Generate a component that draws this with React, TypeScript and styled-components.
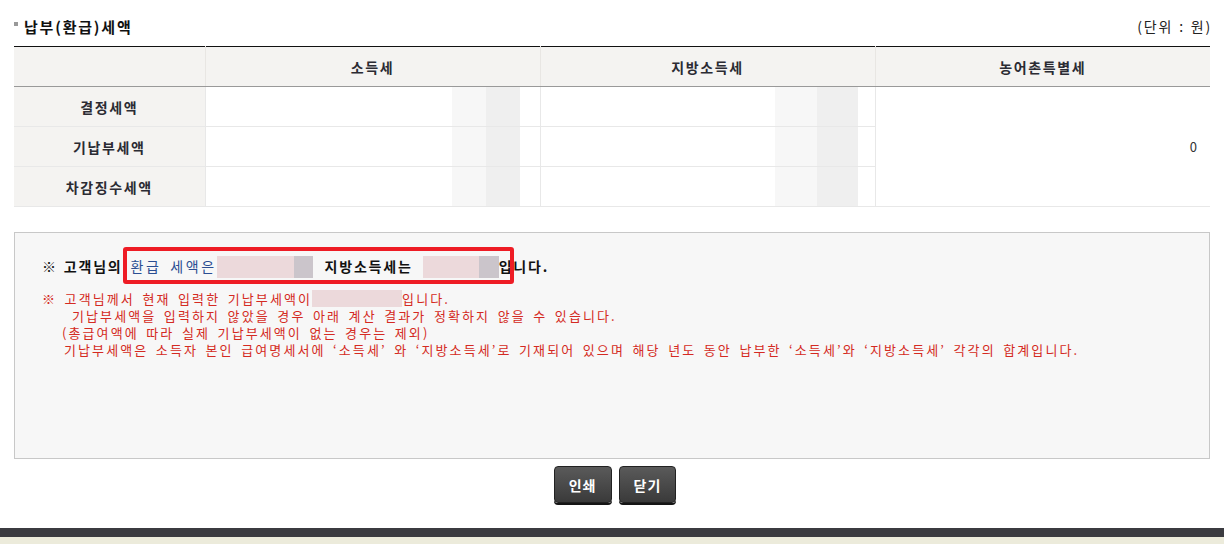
import * as React from "react";
import styled, { createGlobalStyle } from "styled-components";

const GlobalStyle = createGlobalStyle`
  html, body {
    margin: 0;
    padding: 0;
    background: #ecebdb;
  }
  body {
    font-family: "Noto Sans CJK KR", "Liberation Sans", sans-serif;
    color: #222;
  }
`;

const Page = styled.div`
  width: 1224px;
  height: 544px;
  display: flex;
  flex-direction: column;
  overflow: hidden;
`;

const Window = styled.div`
  background: #fff;
  height: 528px;
  flex: none;
  box-sizing: border-box;
  padding: 14px 14px 0;
  display: flex;
  flex-direction: column;
`;

const BottomBar = styled.div`
  height: 9px;
  flex: none;
  background: #3b3b40;
`;

const TitleRow = styled.div`
  height: 24px;
  display: flex;
  align-items: center;
  justify-content: space-between;
  margin-bottom: 8px;
`;

const Title = styled.h2`
  margin: 0;
  display: flex;
  align-items: center;
  gap: 6px;
  font-size: 15px;
  font-weight: 700;
  letter-spacing: 1.8px;
  color: #111;

  &::before {
    content: "";
    width: 4px;
    height: 4px;
    background: #999;
    margin-top: -4px;
  }
`;

const Unit = styled.span`
  font-size: 14px;
  letter-spacing: 1.8px;
  word-spacing: 1px;
  color: #222;
  margin-right: -2px;
`;

const Table = styled.table`
  width: 100%;
  table-layout: fixed;
  border-collapse: collapse;
  border-top: 1px solid #111;
`;

const Th = styled.th`
  height: 39px;
  padding: 0;
  background: #f4f3f1;
  border-bottom: 1px solid #999;
  border-left: 1px solid #e8e6e3;
  font-size: 14px;
  font-weight: 700;
  letter-spacing: 1.6px;
  color: #2b2b33;
  &:first-child {
    border-left: none;
  }
`;

const RowLabel = styled.th`
  height: 39px;
  padding: 0;
  background: #f4f3f1;
  border-bottom: 1px solid #e8e8e8;
  font-size: 14px;
  font-weight: 700;
  letter-spacing: 1.6px;
  color: #2b2b33;
`;

const Td = styled.td<{ $pad?: number }>`
  height: 39px;
  padding: 0 ${(p) => p.$pad ?? 13}px 0 0;
  border-bottom: 1px solid #e8e8e8;
  border-left: 1px solid #e8e8e8;
  text-align: right;
  vertical-align: middle;
  font-size: 13px;
  color: #333;
`;

const Blur = styled.span<{ $w: number }>`
  display: inline-block;
  vertical-align: middle;
  width: ${(p) => p.$w}px;
  height: 39px;
  background: linear-gradient(
    to right,
    #f7f7f7 0%,
    #f7f7f7 50%,
    #efefef 50%,
    #efefef 100%
  );
`;

const Notice = styled.div`
  position: relative;
  margin-top: 25px;
  height: 227px;
  box-sizing: border-box;
  border: 1px solid #c8c8c8;
  background: #f7f7f7;
  padding: 23px 0 0 27px;
`;

const Summary = styled.p`
  margin: 0;
  height: 20px;
  line-height: 20px;
  font-size: 14px;
  font-weight: 700;
  letter-spacing: 1.8px;
  word-spacing: 1px;
  color: #111;
  white-space: nowrap;
`;

const Blue = styled.span`
  color: #2b4e92;
  font-weight: 400;
  letter-spacing: 2.6px;
  word-spacing: 3px;
  margin-left: 2px;
`;

const Masked = styled.span<{ $pink: number; $gray: number; $h: number; $gap?: number }>`
  display: inline-block;
  vertical-align: middle;
  width: ${(p) => p.$pink + p.$gray}px;
  height: ${(p) => p.$h}px;
  margin-top: -3px;
  margin-left: ${(p) => p.$gap ?? 0}px;
  background: linear-gradient(
    to right,
    #ecd9db 0,
    #ecd9db ${(p) => p.$pink}px,
    #cbc5cb ${(p) => p.$pink}px
  );
`;

const Highlight = styled.div`
  position: absolute;
  left: 108px;
  top: 14px;
  width: 391px;
  height: 37px;
  box-sizing: border-box;
  border: 4px solid #ee1c25;
  border-radius: 3px;
`;

const Notes = styled.div`
  margin-top: 14px;
  color: #d42a22;
  font-size: 13px;
  letter-spacing: 2.1px;
  word-spacing: 2.5px;
`;

const Note = styled.p<{ $indent?: number }>`
  margin: 0;
  height: 17px;
  line-height: 17px;
  padding-left: ${(p) => p.$indent ?? 0}px;
  white-space: nowrap;
`;

const Buttons = styled.div`
  margin-top: 7px;
  padding-left: 6px;
  display: flex;
  justify-content: center;
  gap: 7px;
`;

const Button = styled.button`
  height: 37px;
  padding: 0 14px;
  border: 1px solid #222;
  border-radius: 4px;
  background: linear-gradient(#5a5a5a, #3a3a3a);
  box-shadow: 0 2px 0 #151515;
  color: #fff;
  font-family: inherit;
  font-size: 14px;
  font-weight: 700;
  letter-spacing: 1px;
  cursor: pointer;
`;

const rows = ["결정세액", "기납부세액", "차감징수세액"];

export default function App() {
  return (
    <Page>
      <GlobalStyle />
      <Window>
        <TitleRow>
          <Title>납부(환급)세액</Title>
          <Unit>(단위 : 원)</Unit>
        </TitleRow>
        <Table>
          <colgroup>
            <col style={{ width: 191 }} />
            <col style={{ width: 335 }} />
            <col style={{ width: 335 }} />
            <col />
          </colgroup>
          <thead>
            <tr>
              <Th />
              <Th>소득세</Th>
              <Th>지방소득세</Th>
              <Th>농어촌특별세</Th>
            </tr>
          </thead>
          <tbody>
            {rows.map((label, i) => (
              <tr key={label}>
                <RowLabel>{label}</RowLabel>
                <Td $pad={20}>
                  <Blur $w={68} />
                </Td>
                <Td $pad={17}>
                  <Blur $w={83} />
                </Td>
                {i === 0 && <Td rowSpan={3}>0</Td>}
              </tr>
            ))}
          </tbody>
        </Table>
        <Notice>
          <Summary>
            ※ 고객님의 <Blue>환급 세액은</Blue>
            <Masked $pink={77} $gray={19} $h={22} />
            &nbsp;&nbsp;지방소득세는
            <Masked $pink={56} $gray={20} $h={22} $gap={10} />
            입니다.
          </Summary>
          <Highlight />
          <Notes>
            <Note>
              ※ 고객님께서 현재 입력한 기납부세액이
              <Masked $pink={90} $gray={0} $h={17} />
              입니다.
            </Note>
            <Note $indent={30}>
              기납부세액을 입력하지 않았을 경우 아래 계산 결과가 정확하지 않을 수 있습니다.
            </Note>
            <Note $indent={20}>(총급여액에 따라 실제 기납부세액이 없는 경우는 제외)</Note>
            <Note $indent={22}>
              기납부세액은 소득자 본인 급여명세서에 ‘소득세’ 와 ‘지방소득세’로 기재되어 있으며 해당 년도 동안 납부한 ‘소득세’와 ‘지방소득세’ 각각의 합계입니다.
            </Note>
          </Notes>
        </Notice>
        <Buttons>
          <Button>인쇄</Button>
          <Button>닫기</Button>
        </Buttons>
      </Window>
      <BottomBar />
    </Page>
  );
}
